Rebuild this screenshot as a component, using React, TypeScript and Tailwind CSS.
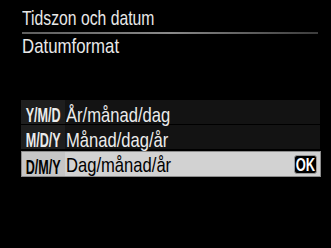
const rows = [
  { code: 'Y/M/D', label: 'År/månad/dag', selected: false },
  { code: 'M/D/Y', label: 'Månad/dag/år', selected: false },
  { code: 'D/M/Y', label: 'Dag/månad/år', selected: true },
]

function FormatRow({ code, label, selected }: { code: string; label: string; selected: boolean }) {
  if (selected) {
    return (
      <div className="mt-[2px] flex h-[26px] items-center border border-[#8c8c8c] bg-[#d2d2d2] text-black">
        <div className="flex h-full w-[43px] items-center justify-center bg-[#c6c6c6]">
          <span className="mt-[4px] inline-block origin-center scale-x-[0.6] text-[21px] font-bold leading-none">{code}</span>
        </div>
        <div className="ml-[1px] mt-[4px] flex-1">
          <span className="inline-block origin-left scale-x-[0.79] text-[21px] leading-none">{label}</span>
        </div>
        <span className="mr-[3px] flex h-[19px] w-[23px] items-center justify-center rounded-[3px] border border-[#9a9a9a] bg-black text-white">
          <span className="mt-[2px] inline-block scale-x-[0.72] text-[18px] font-bold leading-none">OK</span>
        </span>
      </div>
    )
  }
  return (
    <div className="mb-[1px] flex h-[24px] w-[299px] items-center bg-[#131313] text-[#ececec]">
      <div className="flex h-full w-[44px] items-center justify-center bg-[#1e1e1e]">
        <span className="mt-[4px] inline-block origin-center scale-x-[0.6] text-[21px] font-bold leading-none">{code}</span>
      </div>
      <span className="ml-[1px] mt-[4px] inline-block origin-left scale-x-[0.79] text-[21px] leading-none">{label}</span>
    </div>
  )
}

export default function App() {
  return (
    <div
      className="h-[248px] w-[331px] overflow-hidden bg-black text-[#e8e8e8]"
      style={{ fontFamily: '"Liberation Sans", Arial, sans-serif' }}
    >
      <div className="whitespace-nowrap pl-[22px] pt-[7px] text-[21px] leading-[22px]">
        <span className="inline-block origin-left scale-x-[0.75]">Tidszon och datum</span>
      </div>
      <div className="ml-[22px] mt-[3px] h-[2px] w-[296px] bg-gradient-to-r from-[#5e5e5e] via-[#8a8a8a] to-[#3c3c3c]" />
      <div className="mt-[1px] whitespace-nowrap pl-[22px] text-[21px] leading-[22px]">
        <span className="inline-block origin-left scale-x-[0.8]">Datumformat</span>
      </div>
      <div className="ml-[21px] mt-[43px] w-[300px]">
        {rows.map((r) => (
          <FormatRow key={r.code} {...r} />
        ))}
      </div>
    </div>
  )
}
